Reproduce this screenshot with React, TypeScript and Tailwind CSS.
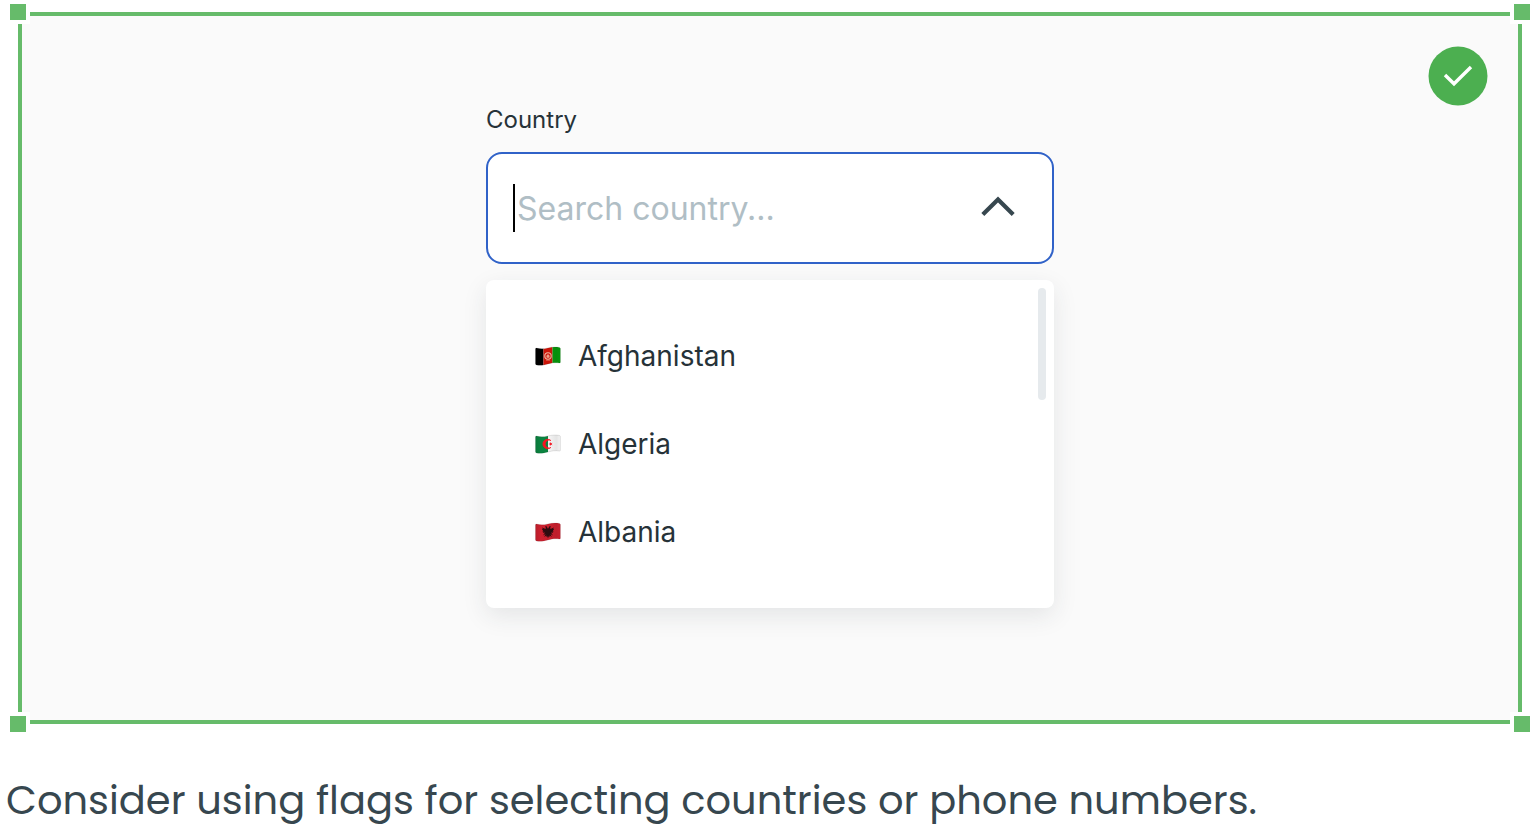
import type { ReactNode } from "react";

type Option = { code: string; name: string; flag: ReactNode };

const WAVE =
  "M1.5 4 Q1.5 3 2.5 3.1 C7 4.2 10 3.8 14 2.9 C18 2.1 21 1.7 25.4 2.4 Q26.4 2.6 26.4 3.6 V17.2 Q26.4 18.2 25.4 18 C21 17.3 18 18 14 18.9 C10 19.9 7 20.7 2.5 20 Q1.5 19.8 1.5 18.8 Z";

function Flag({ id, children }: { id: string; children: ReactNode }) {
  return (
    <svg aria-hidden="true" viewBox="0 0 28 22" className="h-[22px] w-7 shrink-0">
      <defs>
        <clipPath id={`clip-${id}`}>
          <path d={WAVE} />
        </clipPath>
        <linearGradient id={`shade-${id}`} x1="0" x2="1" y1="0" y2="0">
          <stop offset="0" stopColor="#000" stopOpacity="0.12" />
          <stop offset="0.25" stopColor="#000" stopOpacity="0" />
          <stop offset="0.55" stopColor="#000" stopOpacity="0.02" />
          <stop offset="0.8" stopColor="#000" stopOpacity="0.08" />
          <stop offset="1" stopColor="#000" stopOpacity="0" />
        </linearGradient>
      </defs>
      <g clipPath={`url(#clip-${id})`}>
        {children}
        <rect width="28" height="22" fill={`url(#shade-${id})`} />
      </g>
      <path d={WAVE} fill="none" stroke="#000" strokeOpacity="0.14" strokeWidth="0.7" />
    </svg>
  );
}

const options: Option[] = [
  {
    code: "af",
    name: "Afghanistan",
    flag: (
      <Flag id="af">
        <rect width="9.5" height="22" fill="#000" />
        <rect x="9.5" width="9" height="22" fill="#cf1408" />
        <rect x="18.5" width="10" height="22" fill="#079a0c" />
        <circle cx="14" cy="11" r="3.2" fill="none" stroke="#f3b9a4" strokeWidth="1.1" />
        <path d="M12.8 12.4v-1.8l1.2-1 1.2 1v1.8zM12 15.2h4" fill="#f0a58e" stroke="#f0a58e" strokeWidth="0.6" />
      </Flag>
    ),
  },
  {
    code: "dz",
    name: "Algeria",
    flag: (
      <Flag id="dz">
        <rect width="14" height="22" fill="#0b8440" />
        <rect x="14" width="14" height="22" fill="#f8f8f8" />
        <path d="M17 7.6A4.8 4.8 0 1 0 17 14.4A3.9 3.9 0 1 1 17 7.6Z" fill="#fb1420" stroke="#fb1420" strokeWidth="0.6" />
        <path d="M14.4 11l1.5-.5v-1.7l1 1.4 1.6-.5-1 1.3 1 1.3-1.6-.5-1 1.4v-1.7z" fill="#fb1420" />
      </Flag>
    ),
  },
  {
    code: "al",
    name: "Albania",
    flag: (
      <Flag id="al">
        <rect width="28" height="22" fill="#cd202f" />
        <path
          d="M13.8 7.6 12.6 5.2 10.8 5.6 11.8 6.6 11.6 8 8 6.6 8.8 8 7.8 8.4 9.2 9.4 8.2 10.2 9.6 10.8 8.8 12 11 11.6 9 14.4 11.6 13 10.2 16 12.4 14.6 12.6 16.2 13.3 15.2 14 17.6 14.7 15.2 15.4 16.2 15.6 14.6 17.8 16 16.4 13 19 14.4 17 11.6 19.2 12 18.4 10.8 19.8 10.2 18.8 9.4 20.2 8.4 19.2 8 20 6.6 16.4 8 16.2 6.6 17.2 5.6 15.4 5.2 14.2 7.6Z"
          fill="#2e0c10"
        />
      </Flag>
    ),
  },
];

function Corner({ place }: { place: string }) {
  return <span aria-hidden="true" className={`absolute size-6 border-4 border-white bg-[#66bb6a] ${place}`} />;
}

function CountryPicker() {
  return (
    <div className="flex w-full max-w-[568px] flex-col gap-4 text-[#263238]">
      <label htmlFor="country" className="text-2xl leading-8">
        Country
      </label>
      <div className="flex h-28 items-center rounded-2xl border-2 border-[#3062c8] bg-white pr-9 pl-[25px]">
        <span aria-hidden="true" className="h-12 w-0.5 shrink-0 bg-black" />
        <input
          id="country"
          type="text"
          role="combobox"
          aria-expanded="true"
          aria-controls="country-list"
          placeholder="Search country..."
          className="min-w-0 flex-1 bg-transparent pt-0.5 pl-0.5 text-[32px] leading-10 outline-none placeholder:text-[#b0bec5]"
        />
        <button type="button" aria-label="Close list" className="shrink-0">
          <svg aria-hidden="true" viewBox="0 0 36 28" className="h-7 w-9" fill="none" stroke="#37474f" strokeWidth="4.2">
            <path d="M2.8 20.4 18 5.4 33.2 20.4" />
          </svg>
        </button>
      </div>
      <div className="relative rounded-lg bg-white py-8 shadow-[0_8px_24px_rgba(38,50,56,0.1)]">
        <ul id="country-list" role="listbox" aria-label="Country">
          {options.map((option) => (
            <li
              key={option.code}
              role="option"
              aria-selected="false"
              className="flex h-[88px] items-center gap-4 px-12 text-[28px] leading-10"
            >
              {option.flag}
              {option.name}
            </li>
          ))}
        </ul>
        <span aria-hidden="true" className="absolute top-2 right-2 h-28 w-2 rounded-full bg-[#e6eaed]" />
      </div>
    </div>
  );
}

export default function App() {
  return (
    <main className="bg-white pt-3 font-['Inter',sans-serif]">
      <section className="relative mx-[18px] flex justify-center border-4 border-[#66bb6a] bg-[#fafafa] px-6 pt-[88px] pb-28">
        <Corner place="-top-4 -left-4" />
        <Corner place="-top-4 -right-4" />
        <Corner place="-bottom-4 -left-4" />
        <Corner place="-right-4 -bottom-4" />
        <svg role="img" aria-label="Recommended" viewBox="0 0 60 60" className="absolute top-[30px] right-[30px] size-[60px]">
          <circle cx="30" cy="30" r="29.5" fill="#4caf50" />
          <path d="M17 29 26 37.8 43 21" fill="none" stroke="#fff" strokeWidth="3.4" />
        </svg>
        <CountryPicker />
      </section>
      <p className="mt-12 px-1.5 font-['Poppins','Inter',sans-serif] text-[40px] leading-[56px] text-[#37474f]">
        Consider using flags for selecting countries or phone numbers.
      </p>
    </main>
  );
}
